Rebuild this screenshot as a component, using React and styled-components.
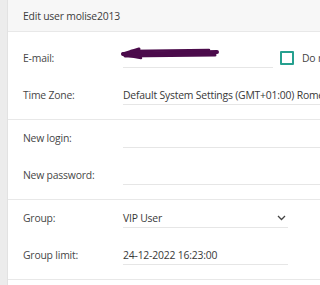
import React from "react";
import styled, { createGlobalStyle } from "styled-components";

const GlobalStyle = createGlobalStyle`
  html, body {
    margin: 0;
    padding: 0;
    background: #ececec;
    overflow: hidden;
  }
  body {
    font-family: "Open Sans", "Noto Sans", sans-serif;
    font-size: 10.4px;
    letter-spacing: -0.2px;
    color: #444;
  }
`;

const Page = styled.div`
  display: flex;
  width: 320px;
  height: 285px;
  padding-left: 7px;
  box-sizing: border-box;
  overflow: hidden;
`;

const Panel = styled.div`
  flex: 0 0 520px;
  background: #fff;
  border-left: 1px solid #e2e2e2;
`;

const Header = styled.div`
  height: 31px;
  display: flex;
  align-items: center;
  padding-left: 15px;
  background: #f7f7f7;
  border-bottom: 1px solid #e8e8e8;
  color: #3c3c3c;
`;

const Section = styled.div`
  display: flex;
  flex-direction: column;
  gap: 9px;
  padding: ${(p) => p.$top || 0}px 0 14px 15px;
  border-bottom: 1px solid #e8e8e8;
`;

const Row = styled.div`
  display: flex;
  align-items: flex-end;
  height: 28px;
`;

const Label = styled.div`
  width: 100px;
  flex: 0 0 100px;
  line-height: 19px;
  color: #474747;
`;

const Field = styled.div`
  position: relative;
  width: ${(p) => (p.$w ? `${p.$w}px` : "auto")};
  flex: ${(p) => (p.$w ? "0 0 auto" : "1 1 auto")};
  height: 28px;
  box-sizing: border-box;
  padding-top: 9px;
  border-bottom: 1px solid #e6e6e6;
  line-height: 18px;
  color: #383838;
  white-space: nowrap;
  display: flex;
  justify-content: space-between;
`;

const Check = styled.div`
  display: flex;
  align-items: center;
  gap: 8px;
  margin-left: 7px;
  height: 28px;
  padding-top: 8px;
  box-sizing: border-box;
  white-space: nowrap;
`;

const Box = styled.span`
  width: 14px;
  height: 14px;
  box-sizing: border-box;
  border: 2px solid #26a08f;
  border-radius: 1px;
`;

const Scribble = () => (
  <svg width="104" height="16" viewBox="0 0 104 16" style={{ position: "absolute", left: -4, top: 5 }}>
    <g stroke="#4b0b4b" strokeLinecap="round" fill="none">
      <path d="M4 9 L20 4" strokeWidth="3" />
      <path d="M4 9 L98 7" strokeWidth="4" />
      <path d="M6 11 L96 10" strokeWidth="3" />
      <path d="M12 6 L90 5" strokeWidth="2.5" />
      <path d="M5 10 L22 13" strokeWidth="2.5" />
    </g>
  </svg>
);

const Chevron = () => (
  <svg width="9" height="6" viewBox="0 0 9 6" style={{ marginTop: 6, marginRight: 2 }}>
    <path d="M1 1 L4.5 4.5 L8 1" stroke="#444" strokeWidth="1.3" fill="none" />
  </svg>
);

export default function App() {
  return (
    <Page>
      <GlobalStyle />
      <Panel>
        <Header>Edit user molise2013</Header>
        <Section $top={8}>
          <Row>
            <Label>E-mail:</Label>
            <Field $w={150}>
              <Scribble />
            </Field>
            <Check>
              <Box />
              Do not send notifications
            </Check>
          </Row>
          <Row>
            <Label>Time Zone:</Label>
            <Field>Default System Settings (GMT+01:00) Rome</Field>
          </Row>
        </Section>
        <Section>
          <Row>
            <Label>New login:</Label>
            <Field />
          </Row>
          <Row>
            <Label>New password:</Label>
            <Field />
          </Row>
        </Section>
        <Section>
          <Row>
            <Label>Group:</Label>
            <Field $w={165}>
              VIP User
              <Chevron />
            </Field>
          </Row>
          <Row>
            <Label>Group limit:</Label>
            <Field $w={165}>24-12-2022 16:23:00</Field>
          </Row>
        </Section>
      </Panel>
    </Page>
  );
}
